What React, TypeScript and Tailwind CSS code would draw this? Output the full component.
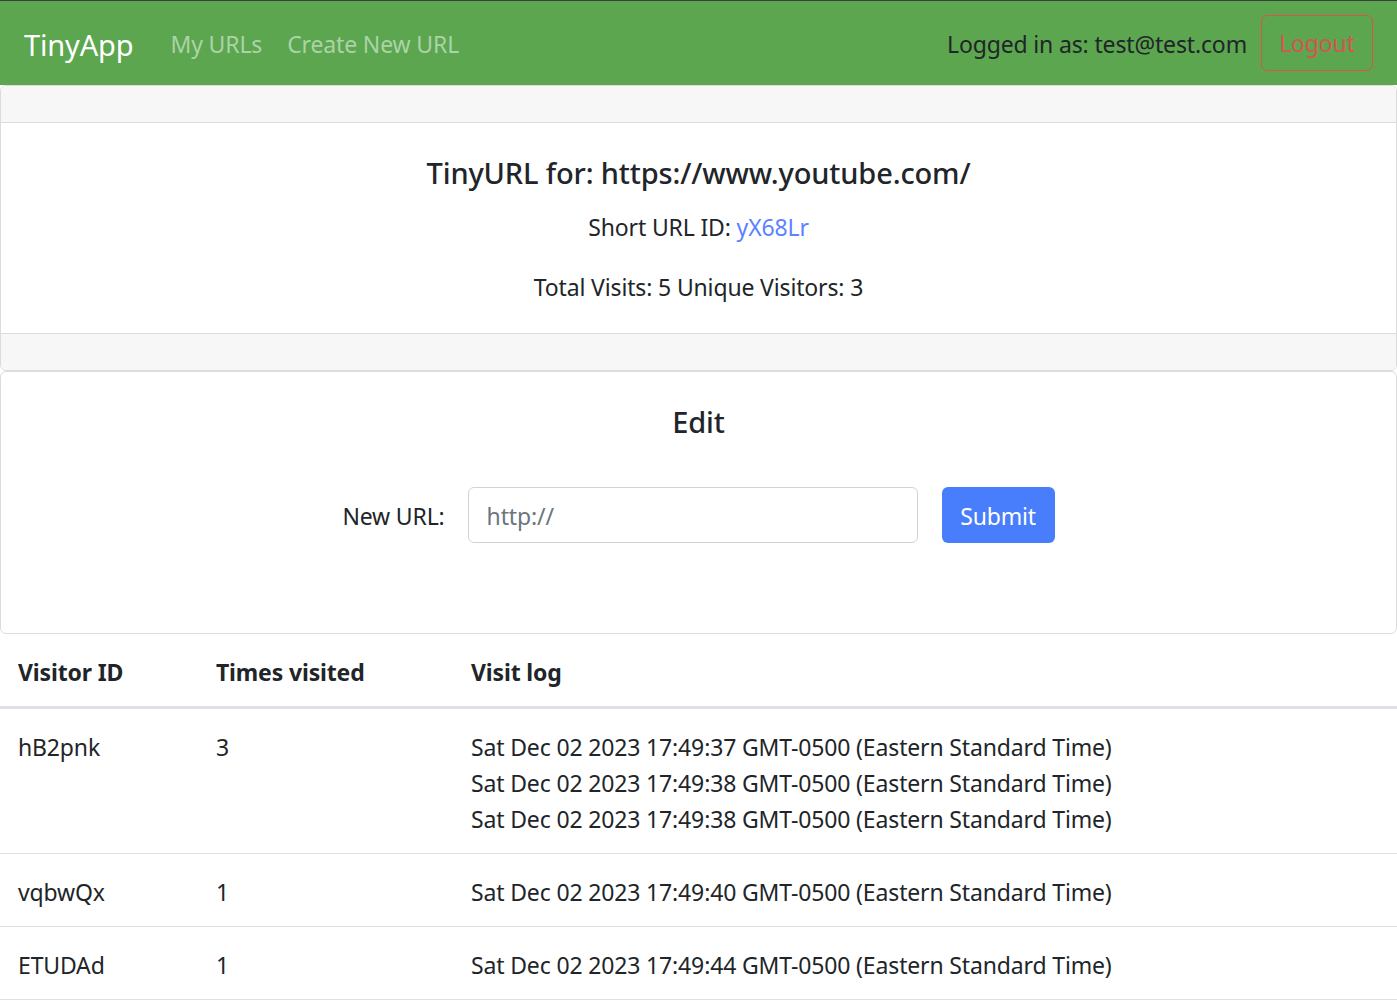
import React from "react";

const font = { fontFamily: '"Noto Sans", "Open Sans", Arial, sans-serif' };

const rows = [
  {
    id: "hB2pnk",
    times: "3",
    log: [
      "Sat Dec 02 2023 17:49:37 GMT-0500 (Eastern Standard Time)",
      "Sat Dec 02 2023 17:49:38 GMT-0500 (Eastern Standard Time)",
      "Sat Dec 02 2023 17:49:38 GMT-0500 (Eastern Standard Time)",
    ],
  },
  { id: "vqbwQx", times: "1", log: ["Sat Dec 02 2023 17:49:40 GMT-0500 (Eastern Standard Time)"] },
  { id: "ETUDAd", times: "1", log: ["Sat Dec 02 2023 17:49:44 GMT-0500 (Eastern Standard Time)"] },
];

export default function App() {
  return (
    <div className="min-h-screen bg-white text-[#212529] text-[23px] leading-[36px] tracking-[-0.15px]" style={font}>
      <div className="h-px bg-[#3a3f44]" />
      <nav className="h-[84px] bg-[#5ba64f] flex items-center pl-6 pr-6 pt-[2px]">
        <span className="text-[29px] leading-[45px] text-white mr-[37px]">TinyApp</span>
        <span className="text-[#acd3a7] mr-[25px]">My URLs</span>
        <span className="text-[#acd3a7]">Create New URL</span>
        <div className="ml-auto flex items-center">
          <span className="mr-[14px]">Logged in as: test@test.com</span>
          <button className="h-[56px] w-[112px] border border-[#d9534f] rounded-[6px] text-[#d9534f] mt-[-2px]">Logout</button>
        </div>
      </nav>

      <div className="border border-[#dcdcdc] rounded-[6px] overflow-hidden">
        <div className="h-[37px] bg-[#f6f7f6] border-b border-[#dcdcdc]" />
        <div className="px-[30px] pt-[32px] pb-[28px] text-center">
          <h5 className="text-[29px] leading-[36px] font-medium mb-[18px]">TinyURL for: https://www.youtube.com/</h5>
          <p className="mb-[24px]">
            Short URL ID: <a className="text-[#5b82ff]">yX68Lr</a>
          </p>
          <p>Total Visits: 5 Unique Visitors: 3</p>
        </div>
        <div className="h-[37px] bg-[#f6f7f6] border-t border-[#dcdcdc]" />
      </div>

      <div className="border border-[#dcdcdc] rounded-[6px] h-[263px] px-[30px] pt-[32px]">
        <h5 className="text-[29px] leading-[36px] font-medium text-center">Edit</h5>
        <div className="flex items-center justify-center mt-[47px]">
          <label className="mr-[23px] pt-[2px]">New URL:</label>
          <div className="w-[450px] h-[56px] border border-[#ced4da] rounded-[6px] flex items-center px-[18px] pt-[2px] text-[#6c757d]">
            http://
          </div>
          <button className="ml-[24px] h-[56px] w-[113px] rounded-[6px] bg-[#487efc] text-white pt-[2px]">Submit</button>
        </div>
      </div>

      <table className="w-full border-collapse text-left">
        <thead>
          <tr className="border-b-[3px] border-[#dee2e6]">
            <th className="w-[198px] px-[18px] pt-[20px] pb-[16px] font-bold">Visitor ID</th>
            <th className="w-[255px] px-[18px] pt-[20px] pb-[16px] font-bold">Times visited</th>
            <th className="px-[18px] pt-[20px] pb-[16px] font-bold">Visit log</th>
          </tr>
        </thead>
        <tbody>
          {rows.map((r) => (
            <tr key={r.id} className="border-b border-[#dee2e6] align-top">
              <td className="px-[18px] pt-[20px] pb-[16px]">{r.id}</td>
              <td className="px-[18px] pt-[20px] pb-[16px]">{r.times}</td>
              <td className="px-[18px] pt-[20px] pb-[16px]">
                {r.log.map((l, i) => (
                  <div key={i}>{l}</div>
                ))}
              </td>
            </tr>
          ))}
        </tbody>
      </table>
    </div>
  );
}
